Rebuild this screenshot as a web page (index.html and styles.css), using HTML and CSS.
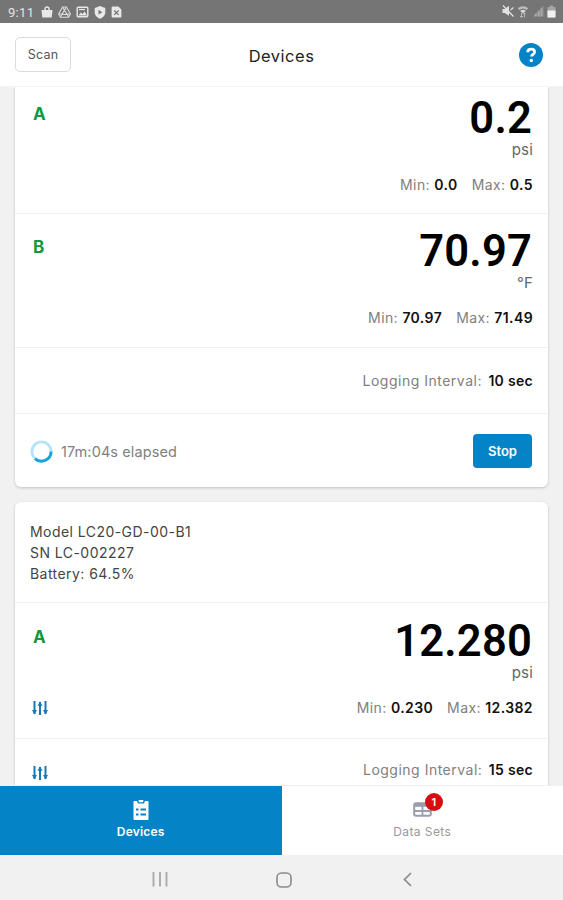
FILE: index.html
```html
<!DOCTYPE html>
<html lang="en">
<head>
    <meta charset="UTF-8">
    <meta name="viewport" content="width=device-width, initial-scale=1.0">
    <title>Devices</title>
    <link rel="stylesheet" href="styles.css">
</head>
<body>
    <div class="statusbar">
        <span class="clock">9:11</span>
        <div class="notifications">
            <svg width="12" height="12" viewBox="0 0 12 12"><path d="M.5 4h11l-.8 7.5H1.3z" fill="#e8e8e8"/><path d="M4 5V3a2 2 0 0 1 4 0v2" fill="none" stroke="#e8e8e8" stroke-width="1.4"/></svg>
            <svg width="13" height="12" viewBox="0 0 13 12" fill="none" stroke="#dadada" stroke-width="1.1"><path d="M4.6 1h3.8l4 7-1.8 3.2H2.4L.6 8z"/><path d="M6.5 4.2 9 8.5H4z"/><path d="M4.6 1 6.5 4.2 8.4 1M.8 8H4l-1.6 3M12.2 8H9l1.6 3"/></svg>
            <svg width="13" height="12" viewBox="0 0 13 12"><rect x="1.2" y="1.2" width="10.6" height="9.6" rx="1" fill="none" stroke="#e8e8e8" stroke-width="1.4"/><path d="M2.5 9.5l2.4-3 1.6 1.6 2-2.6 2.6 4z" fill="#e8e8e8"/><path d="M3 3.5h6" stroke="#e8e8e8" stroke-width="1.2"/></svg>
            <svg width="12" height="13" viewBox="0 0 12 13"><path d="M6 0l5.3 2v4.2c0 3.2-2.4 5.4-5.3 6.6C3.1 11.6.7 9.4.7 6.2V2z" fill="#e8e8e8"/><path d="M4.5 3.8v4.8l3.8-2.4z" fill="#757575"/></svg>
            <svg width="11" height="12" viewBox="0 0 11 12"><path d="M.6 1.5A1 1 0 0 1 1.6.5h5.8L10.4 3.5v7a1 1 0 0 1-1 1H1.6a1 1 0 0 1-1-1z" fill="#e8e8e8"/><path d="M3.2 4.5l4.4 4.4M7.6 4.5 3.2 8.9" stroke="#757575" stroke-width="1.2"/></svg>
        </div>
        <div class="signals">
            <svg width="12" height="12" viewBox="0 0 12 12"><path d="M.5 4h2.3L7 .8v10L2.8 8H.5z" fill="#e2e2e2"/><path d="M1 .5l10.5 11" stroke="#e2e2e2" stroke-width="1.3"/><path d="M8.5 5l3-2.5" stroke="#e2e2e2" stroke-width="1.2"/></svg>
            <svg width="12" height="13" viewBox="0 0 12 13"><path d="M.8 3.2a8 8 0 0 1 10.4 0L9.6 5a5.500 5.500 0 0 0-7.200 0z" fill="#bdbdbd"/><path d="M3.200 6a4 4 0 0 1 5.600 0L6 8.500z" fill="#d8d8d8"/><path d="M4.500 8v4.500M3 11l1.500 1.500L6 11M7.500 12.500V8M6.200 9.400 7.500 8l1.300 1.400" fill="none" stroke="#bdbdbd" stroke-width=".9"/></svg>
            <svg width="12" height="12" viewBox="0 0 12 12"><path d="M11.500.5v11H.5z" fill="#929292"/><path d="M3 9h1.500v2.500H3zM6 6.500h1.500v5H6zM9 3.500h1.300v8H9z" fill="#acacac"/></svg>
            <svg width="9" height="13" viewBox="0 0 9 13"><path d="M3 .5h3V2h2.500v10.500h-8V2H3z" fill="#a5a5a5"/><path d="M.5 5.500h8v7h-8z" fill="#f0f0f0"/></svg>
        </div>
    </div>

    <header class="header">
        <button class="scan-btn">Scan</button>
        <h1>Devices</h1>
        <svg class="help" width="24" height="24" viewBox="0 0 24 24"><circle cx="12" cy="12" r="12" fill="#0484c6"/><path d="M8.600 9.200C8.700 7.200 10.100 6.100 12.100 6.100c2 0 3.500 1.100 3.500 2.800 0 2.400-3.100 2.500-3.100 4.700" fill="none" stroke="#fff" stroke-width="2.700"/><circle cx="12.300" cy="17.500" r="1.700" fill="#fff"/></svg>
    </header>

    <main class="content">
        <section class="card first">
            <div class="reading reading-top">
                <span class="channel">A</span>
                <div class="value">0.2</div>
                <div class="unit">psi</div>
                <div class="limits"><span>Min: <b>0.0</b></span><span>Max: <b>0.5</b></span></div>
            </div>
            <div class="reading">
                <span class="channel">B</span>
                <div class="value">70.97</div>
                <div class="unit">°F</div>
                <div class="limits"><span>Min: <b>70.97</b></span><span>Max: <b>71.49</b></span></div>
            </div>
            <div class="interval">
                <span class="interval-text">Logging Interval: <b>10 sec</b></span>
            </div>
            <div class="actions">
                <svg width="23" height="23" viewBox="0 0 23 23" fill="none" stroke-width="2.800"><circle cx="11.500" cy="11.500" r="9.600" stroke="#b5e4fa"/><path d="M21.100 11.500A9.600 9.600 0 0 1 5 18.600" stroke="#1ba1e2"/></svg>
                <span class="elapsed">17m:04s elapsed</span>
                <button class="stop-btn">Stop</button>
            </div>
        </section>

        <section class="card">
            <div class="device-info">
                <p class="model">Model LC20-GD-00-B1</p>
                <p class="serial">SN LC-002227</p>
                <p class="battery">Battery: 64.5%</p>
            </div>
            <div class="reading reading-set">
                <span class="channel">A</span>
                <div class="value">12.280</div>
                <div class="unit">psi</div>
                <div class="limits">
                    <svg class="sliders" width="16" height="14" viewBox="0 0 16 14" stroke="#1878b8" fill="#1878b8"><path d="M2.500 0v13M8 1v13M13.500 0v13" stroke-width="2"/><path d="M0 9h5L2.500 13.500zM5.500 4.800h5L8 .3zM11 9h5l-2.500 4.500z" stroke="none"/></svg>
                    <span>Min: <b>0.230</b></span><span>Max: <b>12.382</b></span>
                </div>
            </div>
            <div class="interval">
                <svg class="sliders" width="16" height="14" viewBox="0 0 16 14" stroke="#1878b8" fill="#1878b8"><path d="M2.500 0v13M8 1v13M13.500 0v13" stroke-width="2"/><path d="M0 9h5L2.500 13.500zM5.500 4.800h5L8 .3zM11 9h5l-2.500 4.500z" stroke="none"/></svg>
                <span class="interval-text raised">Logging Interval: <b>15 sec</b></span>
            </div>
        </section>
    </main>

    <nav class="tabs">
        <a class="tab active">
            <svg width="16" height="20" viewBox="0 0 16 20"><path d="M1.500 1H4l1 2.500h6L12 1h2.500a1 1 0 0 1 1 1v17a1 1 0 0 1-1 1h-13a1 1 0 0 1-1-1V2a1 1 0 0 1 1-1z" fill="#fff"/><path d="M5.500 0h5L10 2.300H6z" fill="#fff"/><path d="M3 9.500h2.500M7.500 9.500H13M3 14.500h2.500M7.500 14.500H13" stroke="#0484c6" stroke-width="2"/></svg>
            <span>Devices</span>
        </a>
        <a class="tab">
            <span class="icon-wrap">
                <svg width="19" height="15" viewBox="0 0 19 15"><rect x="1.200" y="1.200" width="16.600" height="12.600" rx="1.800" fill="#fff" stroke="#9a9eab" stroke-width="2"/><path d="M1 2h17v2.800H1z" fill="#9a9eab"/><path d="M9.500 3v11M2 9h15" stroke="#9a9eab" stroke-width="1.800"/></svg>
                <span class="badge">1</span>
            </span>
            <span>Data Sets</span>
        </a>
    </nav>

    <div class="sysnav">
        <svg width="16" height="15" viewBox="0 0 16 15"><path d="M1.500 0v14.500M8 0v14.500M14.500 0v14.500" stroke="#aaa" stroke-width="1.900"/></svg>
        <svg width="16" height="16" viewBox="0 0 16 16"><rect x="1" y="1" width="14" height="14" rx="4.500" fill="none" stroke="#8c8c8c" stroke-width="1.600"/></svg>
        <svg width="9" height="15" viewBox="0 0 9 15"><path d="M8 1 1.500 7.500 8 14" fill="none" stroke="#8c8c8c" stroke-width="1.700"/></svg>
    </div>
</body>
</html>
```
FILE: styles.css
```css
* {
    box-sizing: border-box;
}
body {
    margin: 0;
    height: 900px;
    display: flex;
    flex-direction: column;
    overflow: hidden;
    font-family: Inter, Roboto, sans-serif;
    font-size: 14px;
    color: #444;
    background-color: #f1f1f1;
}
svg {
    display: block;
    flex: none;
}
p, h1 {
    margin: 0;
}
button {
    font-family: inherit;
    padding: 0;
}
.statusbar {
    height: 23px;
    flex: none;
    display: flex;
    align-items: center;
    padding: 1px 7px 0 8px;
    background-color: #757575;
}
.clock {
    width: 33px;
    font-family: Roboto, sans-serif;
    font-size: 13px;
    color: #e4e4e4;
    letter-spacing: 0.3px;
}
.notifications {
    display: flex;
    align-items: center;
    gap: 5px;
}
.signals {
    display: flex;
    align-items: center;
    gap: 3px;
    margin-left: auto;
    padding-bottom: 2px;
}
.header {
    height: 64px;
    flex: none;
    display: grid;
    grid-template-columns: 1fr auto 1fr;
    align-items: center;
    padding: 0 20px 0 15px;
    background-color: #fff;
    border-bottom: 1px solid #f3f3f3;
}
.scan-btn {
    width: 56px;
    height: 35px;
    background: #fff;
    border: 1px solid #d9dbdd;
    border-radius: 5px;
    font-size: 12.5px;
    color: #555;
    letter-spacing: 0.2px;
}
.header h1 {
    font-size: 16.5px;
    font-weight: 400;
    color: #222;
    letter-spacing: 0.5px;
    padding: 3px 0 0 5px;
}
.help {
    justify-self: end;
}
.content {
    flex: 1;
    min-height: 0;
    overflow: hidden;
    padding: 0 15px;
}
.card {
    background-color: #fff;
    border-radius: 6px;
    box-shadow: 0 1px 3px rgba(0, 0, 0, 0.2);
    margin-bottom: 15px;
}
.card.first {
    border-radius: 0 0 6px 6px;
}
.reading {
    display: flex;
    flex-direction: column;
    align-items: flex-end;
    position: relative;
    height: 134px;
    padding: 16px 16px 0;
    border-bottom: 1px solid #f1f1f1;
}
.reading-top {
    height: 127px;
    padding-top: 10px;
}
.reading-set {
    height: 136px;
    padding-top: 17px;
}
.channel {
    position: absolute;
    left: 18px;
    top: 23px;
    font-size: 17px;
    line-height: 20px;
    font-weight: 700;
    color: #109a3c;
}
.reading-top .channel {
    top: 17px;
}
.reading-set .channel {
    top: 24px;
}
.value {
    font-family: Roboto, sans-serif;
    font-size: 43.5px;
    font-weight: 600;
    line-height: 44px;
    letter-spacing: 0.2px;
    color: #000;
}
.unit {
    line-height: 18px;
    margin: 0 -1px 0 0;
    font-size: 15px;
    letter-spacing: 0.2px;
    color: #666;
}
.limits {
    display: flex;
    align-items: center;
    align-self: stretch;
    justify-content: flex-end;
    gap: 14px;
    margin: 16px -1px 0 0;
    line-height: 20px;
    color: #808080;
    letter-spacing: 0.4px;
}
.limits b,
.interval b {
    font-weight: 600;
    color: #111;
}
.sliders {
    margin: 0 auto 0 1px;
}
.interval {
    height: 66px;
    display: flex;
    align-items: center;
    padding: 0 15px 0 16px;
    border-bottom: 1px solid #f1f1f1;
    color: #808080;
    letter-spacing: 0.5px;
}
.interval .sliders {
    margin-top: 2px;
}
.interval-text {
    margin-left: auto;
}
.interval-text.raised {
    padding-bottom: 4px;
}
.interval b {
    margin-left: 2px;
    letter-spacing: 0.3px;
}
.actions {
    height: 73px;
    display: flex;
    align-items: center;
    padding: 1px 16px 0 15px;
}
.elapsed {
    margin-left: 8px;
    font-size: 14.5px;
    letter-spacing: 0.1px;
    color: #808080;
}
.stop-btn {
    width: 59px;
    height: 34px;
    margin-left: auto;
    border: 0;
    border-radius: 4px;
    background-color: #0484c6;
    color: #fff;
    font-size: 13px;
    font-weight: 600;
}
.device-info {
    height: 101px;
    padding: 19px 15px 0;
    border-bottom: 1px solid #f1f1f1;
    line-height: 21px;
    letter-spacing: 0.45px;
    color: #444;
}
.tabs {
    height: 70px;
    flex: none;
    display: flex;
    background-color: #fff;
    border-top: 1px solid #f1f1f1;
}
.tab {
    flex: 1;
    display: flex;
    flex-direction: column;
    align-items: center;
    padding-top: 14px;
    gap: 4px;
    font-size: 12px;
    line-height: 16px;
    letter-spacing: 0.4px;
    color: #999;
}
.tab.active {
    background-color: #0484c6;
    color: #fff;
    font-weight: 600;
    letter-spacing: 0.2px;
}
.icon-wrap {
    position: relative;
    height: 20px;
    padding-top: 2px;
}
.badge {
    position: absolute;
    left: 12px;
    top: -7px;
    width: 18px;
    height: 18px;
    border-radius: 50%;
    background-color: #d80d12;
    color: #fff;
    font-size: 11px;
    font-weight: 600;
    line-height: 18px;
    text-align: center;
    letter-spacing: 0;
}
.sysnav {
    height: 45px;
    flex: none;
    display: flex;
    align-items: center;
    gap: 115px;
    padding: 4px 0 0 152px;
    background-color: #f1f1f1;
}
.sysnav svg:nth-child(2) {
    margin-left: -7px;
    margin-right: -4px;
}
```
